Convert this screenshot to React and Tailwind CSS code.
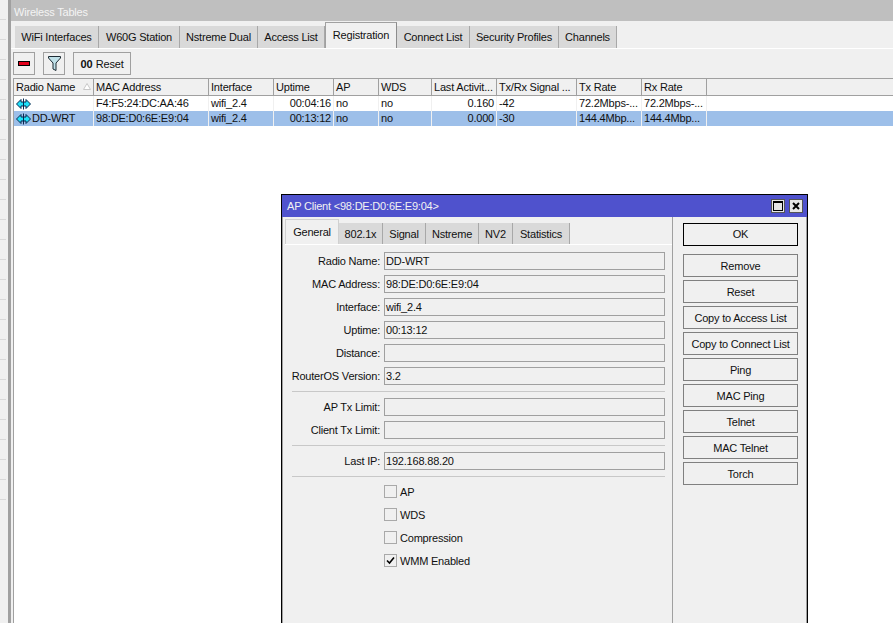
const ticks = Array.from({ length: 25 }, (_, i) => i);
const mainTabs = [
  ['WiFi Interfaces', 'w-[84px]'],
  ['W60G Station', 'w-[81px]'],
  ['Nstreme Dual', 'w-[78px]'],
  ['Access List', 'w-[67px]'],
  ['Registration', 'w-[72px]', true],
  ['Connect List', 'w-[73px]'],
  ['Security Profiles', 'w-[89px]'],
  ['Channels', 'w-[58px]'],
];
const cols = [
  ['w-[80px]', 'Radio Name'],
  ['w-[115px]', 'MAC Address'],
  ['w-[65px]', 'Interface'],
  ['w-[60px]', 'Uptime'],
  ['w-[45px]', 'AP'],
  ['w-[53px]', 'WDS'],
  ['w-[65px]', 'Last Activit...'],
  ['w-[80px]', 'Tx/Rx Signal ...'],
  ['w-[65px]', 'Tx Rate'],
  ['w-[65px]', 'Rx Rate'],
];
const rows = [
  ['', 'F4:F5:24:DC:AA:46', 'wifi_2.4', '00:04:16', 'no', 'no', '0.160', '-42', '72.2Mbps-...', '72.2Mbps-...'],
  ['DD-WRT', '98:DE:D0:6E:E9:04', 'wifi_2.4', '00:13:12', 'no', 'no', '0.000', '-30', '144.4Mbp...', '144.4Mbp...'],
];
const dlgTabs = [
  ['802.1x', 'w-[44px]'],
  ['Signal', 'w-[43px]'],
  ['Nstreme', 'w-[53px]'],
  ['NV2', 'w-[34px]'],
  ['Statistics', 'w-[57px]'],
];
const buttons = ['Remove', 'Reset', 'Copy to Access List', 'Copy to Connect List', 'Ping', 'MAC Ping', 'Telnet', 'MAC Telnet', 'Torch'];

function LinkIcon({ className }) {
  return (
    <svg viewBox="0 0 15 12" className={className}>
      <path d="M0.5 6 L5 1.5 V4 H10 V1.5 L14.5 6 L10 10.5 V8 H5 V10.5 Z" fill="#1fe0f8" stroke="#06264f" strokeWidth="1" strokeLinejoin="miter" />
      <path d="M7.5 0.5 V11.5" stroke="#06264f" strokeWidth="1" />
    </svg>
  );
}

function Field({ label, value }) {
  return (
    <div className="flex h-[18px] items-center">
      <div className="w-[97px] pr-[3px] text-right whitespace-nowrap text-[#111]">{label}</div>
      <div className="ml-[1px] flex h-[18px] w-[281px] items-center border border-[#a0a0a0] bg-[#f0f0f0] pl-[1px] text-[#111]">{value}</div>
    </div>
  );
}

function Check({ label, checked }) {
  return (
    <div className="ml-[98px] flex h-[13px] items-center">
      <div className="flex h-[13px] w-[13px] items-center justify-center border border-[#a9a9a9] bg-[#f0f0f0]">
        {checked && (
          <svg viewBox="0 0 9 9" className="h-[9px] w-[9px]">
            <path d="M1 4.5 L3.5 7 L8 1.5" fill="none" stroke="#000" strokeWidth="1.6" />
          </svg>
        )}
      </div>
      <span className="ml-[3px] pt-[1px] text-[#111]">{label}</span>
    </div>
  );
}

export default function App() {
  return (
    <div className="relative flex h-[623px] w-[893px] overflow-hidden bg-white font-[Liberation_Sans,Arial,sans-serif] text-[11px] leading-none tracking-[-0.2px] text-[#111]">
      {/* desktop strip */}
      <div className="w-[8px] shrink-0 bg-[#f0f0f0]">
        {ticks.map((i) => (
          <div key={i} className="h-[20px] w-[6px] border-b border-[#d9d9d9]" />
        ))}
      </div>
      <div className="flex min-w-0 flex-1 flex-col border-l-[3px] border-[#a0a0a0]">
        <div className="flex h-[21px] shrink-0 items-center bg-[#bfbfbf] pt-[3px] pl-[3px] text-[#f4f4f4]">Wireless Tables</div>
        {/* tabs */}
        <div className="flex h-[28px] shrink-0 items-end border-b border-white bg-[#f0f0f0] pl-[4px]">
          {mainTabs.map(([t, w, active]) =>
            active ? (
              <div key={t} className={`${w} flex h-[26px] items-center justify-center border-x border-t border-[#a0a0a0] border-r-[#8c8c8c] bg-[#f0f0f0] pb-[1px] whitespace-nowrap`}>{t}</div>
            ) : (
              <div key={t} className={`${w} flex h-[22px] items-center justify-center border-r border-[#a8a8a8] bg-[#d9d9d9] pt-[1px] whitespace-nowrap`}>{t}</div>
            )
          )}
        </div>
        {/* toolbar */}
        <div className="flex h-[29px] shrink-0 items-end gap-[8px] bg-[#f0f0f0] pb-[3px] pl-[2px]">
          <div className="flex h-[23px] w-[22px] items-center justify-center border border-[#a0a0a0]">
            <div className="h-[5px] w-[12px] border border-black bg-[#e3001b]" />
          </div>
          <div className="flex h-[23px] w-[22px] items-center justify-center border border-[#a0a0a0]">
            <svg viewBox="0 0 13 15" className="h-[15px] w-[13px]">
              <path d="M0.5 0.5 H12.5 V2 L8 7 V14.5 L5 13 V7 L0.5 2 Z" fill="#bfe0e8" stroke="#1c2a33" strokeWidth="1" />
            </svg>
          </div>
          <div className="flex h-[23px] w-[58px] items-center justify-center border border-[#a0a0a0] pt-[1px]">
            <span className="mr-[3px] font-bold tracking-normal">00</span>Reset
          </div>
        </div>
        {/* table */}
        <div className="flex min-h-0 flex-1 flex-col bg-[#f0f0f0] pl-[2px]">
          <div className="flex-1 border-l border-[#a0a0a0] bg-white">
            <div className="flex h-[18px] border-y border-[#a0a0a0] bg-[#f0f0f0]">
              {cols.map(([w, t], i) => (
                <div key={t} className={`${w} relative flex shrink-0 items-center overflow-hidden border-r border-[#a0a0a0] pt-[1px] pl-[2px] whitespace-nowrap`}>
                  {t}
                  {i === 0 && (
                    <svg viewBox="0 0 8 7" className="absolute top-[4px] right-[2px] h-[7px] w-[8px]">
                      <path d="M0.5 6.5 L4 0.5 L7.5 6.5 Z" fill="#fff" stroke="#c8c8c8" strokeWidth="1" />
                    </svg>
                  )}
                </div>
              ))}
            </div>
            {rows.map((r, ri) => (
              <div key={ri} className={`flex h-[15px] ${ri === 1 ? 'bg-[#9dbfe9]' : 'bg-white'}`}>
                {r.map((c, i) => (
                  <div
                    key={i}
                    className={`${cols[i][0]} flex shrink-0 items-center overflow-hidden border-r border-[#f0f0f0] pl-[2px] whitespace-nowrap ${i === 3 || i === 6 ? 'justify-end pr-[2px]' : ''}`}
                  >
                    {i === 0 && <LinkIcon className="mr-[1px] h-[12px] w-[15px] shrink-0" />}
                    {c}
                  </div>
                ))}
              </div>
            ))}
          </div>
        </div>
      </div>

      {/* floating window */}
      <div className="absolute top-[194px] left-[281px] flex h-[440px] w-[527px] flex-col border border-black bg-[#f0f0f0] shadow-[inset_0_0_0_1px_#a0a0a0]">
        <div className="flex h-[22px] shrink-0 items-center justify-between bg-[#4f52cd] pr-[4px] pl-[5px] text-[#f2f2f2]">
          <span className="pt-[1px]">AP Client &lt;98:DE:D0:6E:E9:04&gt;</span>
          <div className="flex gap-[4px]">
            <div className="flex h-[14px] w-[14px] items-center justify-center border border-[#555] bg-[#e6e6e6]">
              <div className="h-[10px] w-[10px] border border-black border-t-2" />
            </div>
            <div className="flex h-[14px] w-[14px] items-center justify-center border border-[#555] bg-[#e6e6e6]">
              <svg viewBox="0 0 8 8" className="h-[8px] w-[8px]">
                <path d="M1 1 L7 7 M7 1 L1 7" stroke="#000" strokeWidth="2" />
              </svg>
            </div>
          </div>
        </div>
        <div className="flex flex-1">
          {/* left panel */}
          <div className="ml-[3px] w-[388px] shrink-0 border-r border-[#a0a0a0]">
            <div className="flex h-[28px] items-end border-b border-white">
              <div className="flex h-[25px] w-[54px] items-center justify-center border-x border-t border-[#d0d0d0] bg-[#f0f0f0]">General</div>
              {dlgTabs.map(([t, w]) => (
                <div key={t} className={`${w} flex h-[21px] items-center justify-center border-r border-[#a8a8a8] bg-[#d9d9d9] pt-[1px] whitespace-nowrap`}>{t}</div>
              ))}
            </div>
            <div className="flex flex-col pt-[7px] pl-[1px]">
              <div className="flex flex-col gap-[5px]">
                <Field label="Radio Name:" value="DD-WRT" />
                <Field label="MAC Address:" value="98:DE:D0:6E:E9:04" />
                <Field label="Interface:" value="wifi_2.4" />
                <Field label="Uptime:" value="00:13:12" />
                <Field label="Distance:" value="" />
                <Field label="RouterOS Version:" value="3.2" />
              </div>
              <div className="mt-[6px] ml-[6px] h-px w-[373px] bg-[#c8c8c8]" />
              <div className="mt-[6px] flex flex-col gap-[5px]">
                <Field label="AP Tx Limit:" value="" />
                <Field label="Client Tx Limit:" value="" />
              </div>
              <div className="mt-[6px] ml-[6px] h-px w-[373px] bg-[#c8c8c8]" />
              <div className="mt-[6px]">
                <Field label="Last IP:" value="192.168.88.20" />
              </div>
              <div className="mt-[6px] ml-[6px] h-px w-[373px] bg-[#c8c8c8]" />
              <div className="mt-[8px] flex flex-col gap-[10px]">
                <Check label="AP" />
                <Check label="WDS" />
                <Check label="Compression" />
                <Check label="WMM Enabled" checked />
              </div>
            </div>
          </div>
          {/* right buttons */}
          <div className="ml-[10px] flex w-[115px] flex-col pt-[6px]">
            <div className="flex h-[23px] items-center justify-center border border-black">OK</div>
            <div className="mt-[8px] flex flex-col gap-[3px]">
              {buttons.map((b) => (
                <div key={b} className="flex h-[23px] items-center justify-center border border-[#808080] pt-[1px] whitespace-nowrap">{b}</div>
              ))}
            </div>
          </div>
        </div>
      </div>
    </div>
  );
}
